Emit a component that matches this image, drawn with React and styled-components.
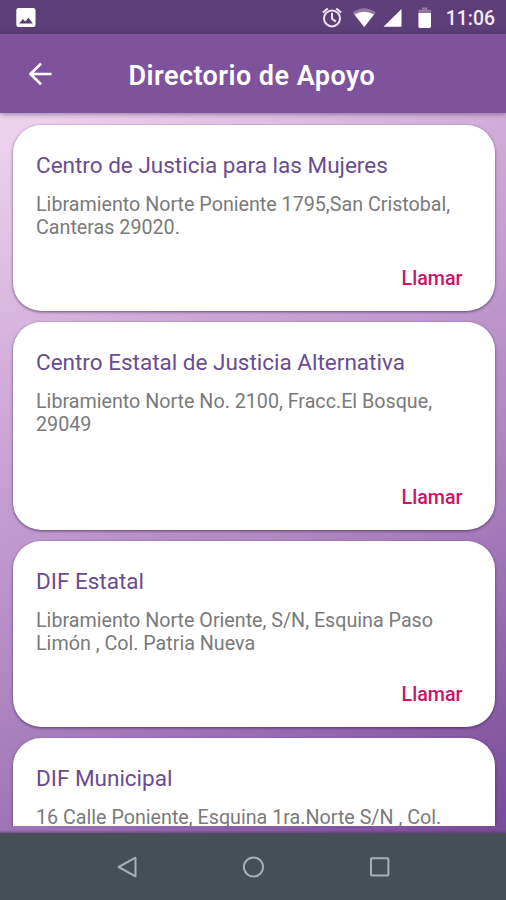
import React from 'react';
import styled, { createGlobalStyle } from 'styled-components';

const GlobalStyle = createGlobalStyle`
  * {
    box-sizing: border-box;
  }
  body {
    margin: 0;
    font-family: Roboto, sans-serif;
  }
  h1,
  h2,
  p {
    margin: 0;
    white-space: pre;
  }
`;

const Screen = styled.div`
  display: flex;
  flex-direction: column;
  width: 506px;
  height: 900px;
  overflow: hidden;
  background: linear-gradient(
    152deg,
    #efd4ee 10%,
    #cda8d6 36%,
    #b890c8 53%,
    #a076b8 70%,
    #7b4c9b 92%
  );
`;

const StatusBar = styled.div`
  display: flex;
  flex: none;
  justify-content: space-between;
  height: 34px;
  background: #5d3e78;

  svg {
    display: block;
    height: 34px;
  }
`;

const StatusRight = styled.div`
  display: flex;
  padding-right: 11px;
`;

const Clock = styled.span`
  padding-left: 2px;
  font-size: 19.4px;
  font-weight: 500;
  line-height: 37px;
  color: #f6e9fa;
`;

const Header = styled.header`
  display: flex;
  flex: none;
  align-items: center;
  height: 79px;
  padding-left: 28px;
  background: #7e539b;
  box-shadow: 0 1px 5px rgba(60, 30, 80, 0.5);

  svg {
    flex: none;
  }
  h1 {
    margin: 4px 0 0 76.5px;
    font-size: 27px;
    font-weight: 600;
    line-height: 32px;
    letter-spacing: 0.45px;
    color: #fff;
  }
`;

const List = styled.main`
  display: flex;
  flex: none;
  flex-direction: column;
  gap: 11px;
  height: 713px;
  padding: 12px 11.5px 0 13px;
  overflow: hidden;
`;

const CardBox = styled.section`
  display: flex;
  flex: none;
  flex-direction: column;
  height: ${({ $height }) => $height}px;
  padding: 26px 32px 19.5px 23px;
  border-radius: 28px;
  background: #fff;
  box-shadow: 0 1px 3px rgba(50, 20, 70, 0.65);
`;

const CardTitle = styled.h2`
  font-size: 22.5px;
  font-weight: 400;
  line-height: 28px;
  color: #6a4c90;
`;

const CardAddress = styled.p`
  padding-top: 15px;
  font-size: 19.7px;
  line-height: 22.5px;
  color: #7a7a7a;
`;

const CallButton = styled.button`
  align-self: flex-end;
  margin-top: auto;
  padding: 0;
  border: 0;
  background: none;
  font-family: inherit;
  font-size: 19.7px;
  font-weight: 500;
  line-height: 26px;
  color: #cb1465;
`;

const NavBar = styled.nav`
  display: flex;
  flex: none;
  justify-content: space-between;
  height: 67px;
  margin-top: 7px;
  padding: 21px 114px 0;
  background: #464e56;
  box-shadow: 0 -1px 2px rgba(70, 50, 90, 0.6);
`;

const places = [
  {
    name: 'Centro de Justicia para las Mujeres',
    address:
      'Libramiento Norte Poniente 1795,San Cristobal,\nCanteras 29020.',
    height: 186,
    canCall: true,
  },
  {
    name: 'Centro Estatal de Justicia Alternativa',
    address: 'Libramiento Norte No. 2100, Fracc.El Bosque,\n29049',
    height: 208.4,
    canCall: true,
  },
  {
    name: 'DIF Estatal',
    address:
      'Libramiento Norte Oriente, S/N, Esquina Paso\nLimón , Col. Patria Nueva',
    height: 186,
    canCall: true,
  },
  {
    name: 'DIF Municipal',
    address: '16 Calle Poniente, Esquina 1ra.Norte S/N , Col.',
    height: 208,
    canCall: false,
  },
];

function Card({ name, address, height, canCall }) {
  return (
    <CardBox $height={height}>
      <CardTitle>{name}</CardTitle>
      <CardAddress>{address}</CardAddress>
      {canCall && <CallButton>Llamar</CallButton>}
    </CardBox>
  );
}

function StatusIcons() {
  return (
    <svg width="124" height="34" viewBox="320 0 124 34" fill="none">
      <g stroke="#f0dff5" strokeWidth="2">
        <circle cx="332" cy="18.4" r="8" />
        <path d="M332 12.8v6l3.8 2.8M322.8 12.6l5-4.2M341.2 12.6l-5-4.2" />
      </g>
      <path d="M352.5 12.5Q364.2 3.8 376 12.5L364.2 27z" fill="#93779f" />
      <path d="M354.4 14.6Q364.2 8.8 374 14.6L364.2 27z" fill="#fff" />
      <path d="M383.5 26.7L401.5 9v17.7z" fill="#fff" />
      <path d="M422 7.5h5.4v2.2h3.6v4h-12.6v-4h3.6z" fill="#93779f" />
      <path d="M418.4 13h12.6v13.5q0 1.4-1.4 1.4h-9.8q-1.4 0-1.4-1.4z" fill="#fff" />
    </svg>
  );
}

export default function App() {
  return (
    <>
      <GlobalStyle />
      <Screen>
        <StatusBar>
          <svg width="50" height="34" viewBox="0 0 50 34">
            <rect x="16.3" y="8" width="19.2" height="19" rx="2.2" fill="#fff" />
            <path
              d="M19.2 23.4l3.7-4.4 2.3 2.6 3.2-3.8 4.4 5.6z"
              fill="#5d3e78"
            />
          </svg>
          <StatusRight>
            <StatusIcons />
            <Clock>11:06</Clock>
          </StatusRight>
        </StatusBar>
        <Header>
          <svg width="24" height="24" viewBox="0 0 24 24" fill="none">
            <path
              d="M23.5 12H2.5M13 1.6L2.5 12 13 22.4"
              stroke="#fff"
              strokeWidth="2.7"
            />
          </svg>
          <h1>Directorio de Apoyo</h1>
        </Header>
        <List>
          {places.map((place) => (
            <Card key={place.name} {...place} />
          ))}
        </List>
        <NavBar>
          <svg width="26" height="26" viewBox="0 0 26 26" fill="none">
            <path
              d="M21.5 3.7v18.6L4.6 13z"
              stroke="#a9afb4"
              strokeWidth="2"
              strokeLinejoin="round"
            />
          </svg>
          <svg width="26" height="26" viewBox="0 0 26 26" fill="none">
            <circle cx="13.5" cy="13" r="9.6" stroke="#a9afb4" strokeWidth="2" />
          </svg>
          <svg width="26" height="26" viewBox="0 0 26 26" fill="none">
            <rect
              x="5"
              y="4.2"
              width="17.4"
              height="17.4"
              rx="0.8"
              stroke="#a9afb4"
              strokeWidth="2"
            />
          </svg>
        </NavBar>
      </Screen>
    </>
  );
}
